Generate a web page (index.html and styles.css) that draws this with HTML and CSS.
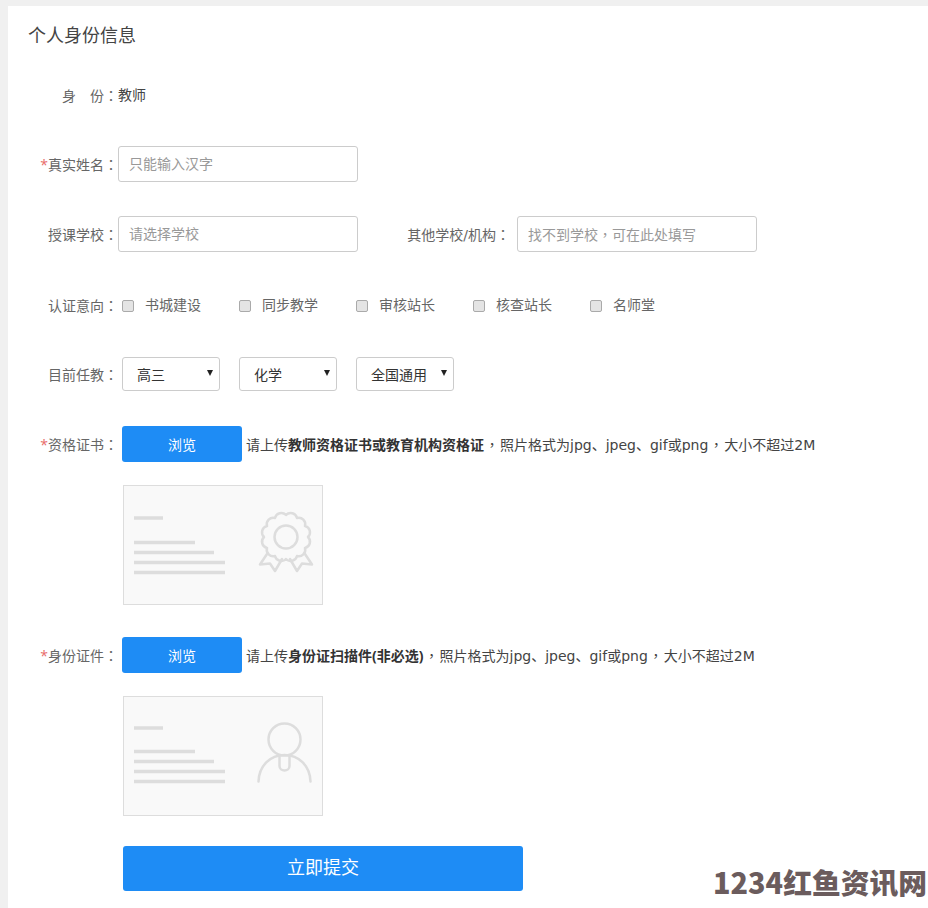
FILE: index.html
```html
<!DOCTYPE html>
<html lang="zh-CN">
<head>
<meta charset="utf-8">
<title>个人身份信息</title>
<link rel="stylesheet" href="styles.css">
</head>
<body>
<main class="card">
  <h1 class="title">个人身份信息</h1>
  <form class="form">
    <div class="row row-identity">
      <span class="label">身　份<span class="pn">：</span></span>
      <span class="value">教师</span>
    </div>
    <div class="row row-name">
      <label class="label"><em class="req">*</em>真实姓名<span class="pn">：</span></label>
      <input class="input" type="text" placeholder="只能输入汉字">
    </div>
    <div class="row row-school">
      <label class="label">授课学校<span class="pn">：</span></label>
      <input class="input" type="text" placeholder="请选择学校">
      <label class="label label-other">其他学校/机构<span class="pn">：</span></label>
      <input class="input input-comma" type="text" placeholder="找不到学校，可在此处填写">
    </div>
    <div class="row row-intent">
      <span class="label">认证意向<span class="pn">：</span></span>
      <div class="checks">
        <label class="check"><input class="box" type="checkbox">书城建设</label>
        <label class="check"><input class="box" type="checkbox">同步教学</label>
        <label class="check"><input class="box" type="checkbox">审核站长</label>
        <label class="check"><input class="box" type="checkbox">核查站长</label>
        <label class="check"><input class="box" type="checkbox">名师堂</label>
      </div>
    </div>
    <div class="row row-job">
      <span class="label">目前任教<span class="pn">：</span></span>
      <div class="selects">
        <span class="select-wrap"><select class="select"><option>高三</option></select></span>
        <span class="select-wrap"><select class="select"><option>化学</option></select></span>
        <span class="select-wrap"><select class="select"><option>全国通用</option></select></span>
      </div>
    </div>
    <div class="row row-upload">
      <span class="label"><em class="req">*</em>资格证书<span class="pn">：</span></span>
      <button class="browse" type="button">浏览</button>
      <span class="hint">请上传<b>教师资格证书或教育机构资格证</b><span class="pn">，</span>照片格式为jpg、jpeg、gif或png<span class="pn">，</span>大小不超过2M</span>
    </div>
    <div class="preview">
      <svg class="art" width="198" height="118" viewBox="1 1 198 118" aria-hidden="true">
        <g class="art-lines">
          <path d="M11 33h29M11 57.500h61M11 67.500h80M11 77.500h91M11 87.500h91"/>
        </g>
        <g class="art-icon">
          <path d="M185 52A6.500 6.500 0 0 1 182 63A6.500 6.500 0 0 1 174 71A6.500 6.500 0 0 1 163 74A6.500 6.500 0 0 1 152 71A6.500 6.500 0 0 1 144 63A6.500 6.500 0 0 1 141 52A6.500 6.500 0 0 1 144 41A6.500 6.500 0 0 1 152 33A6.500 6.500 0 0 1 163 30A6.500 6.500 0 0 1 174 33A6.500 6.500 0 0 1 182 41A6.500 6.500 0 0 1 185 52Z"/>
          <circle cx="163" cy="52" r="11.500"/>
          <path d="M144 69L137 79.500L147 78.500L152 86L159 74M182 69L189 79.500L179 78.500L174 86L167 74"/>
        </g>
      </svg>
    </div>
    <div class="row row-upload row-upload-id">
      <span class="label"><em class="req">*</em>身份证件<span class="pn">：</span></span>
      <button class="browse" type="button">浏览</button>
      <span class="hint">请上传<b>身份证扫描件(非必选)</b><span class="pn">，</span>照片格式为jpg、jpeg、gif或png<span class="pn">，</span>大小不超过2M</span>
    </div>
    <div class="preview">
      <svg class="art" width="198" height="118" viewBox="1 1 198 118" aria-hidden="true">
        <g class="art-lines">
          <path d="M11 32h29M11 55.500h61M11 65.500h80M11 75.500h91M11 85.500h91"/>
        </g>
        <g class="art-icon">
          <circle cx="161.500" cy="43.500" r="16"/>
          <path d="M135.500 85.500C136 70 147 59 161.500 59C176 59 187 70 187.500 85.500"/>
          <path d="M156.500 60V70C156.500 76 166.500 76 166.500 70V60"/>
        </g>
      </svg>
    </div>
    <button class="submit" type="button">立即提交</button>
  </form>
</main>
<div class="watermark">1234红鱼资讯网</div>
</body>
</html>
```

FILE: styles.css
```css
* { box-sizing: border-box; }
html, body { margin: 0; height: 908px; overflow: hidden; }
body {
  position: relative;
  background: #f0f0f0;
  padding: 6px 0 0 8px;
  font-family: "DejaVu Sans", "Noto Sans CJK SC", sans-serif;
  font-size: 14px;
  line-height: 20px;
  color: #666;
}
.card {
  background: #fff;
  height: 902px;
  padding: 18px 0 0 20px;
}
.title {
  margin: 0;
  font-size: 18px;
  font-weight: 400;
  line-height: 24px;
  color: #444;
}
.form { display: flex; flex-direction: column; align-items: flex-start; margin-top: 29px; }
.row { display: flex; align-items: center; height: 36px; }
.label { width: 90px; text-align: right; flex: none; white-space: nowrap; }
.pn { font-family: "Noto Sans CJK TC", sans-serif; font-feature-settings: "locl" 0; }
.req { color: #e86a6a; font-style: normal; font-family: "Open Sans", sans-serif; }
.value { color: #444; }
.row-name { margin-top: 33px; }
.row-school { margin-top: 34px; }
.row-intent { margin-top: 35px; }
.row-job { margin-top: 34px; height: 34px; }
.row-upload { margin-top: 35px; }
.row-upload-id { margin-top: 32px; }
.input {
  width: 240px;
  height: 36px;
  flex: none;
  border: 1px solid #ccc;
  border-radius: 3px;
  padding: 0 10px;
  font: inherit;
  color: #333;
  background: #fff;
  outline: none;
}
.input-comma { font-family: "Noto Sans CJK TC", sans-serif; font-feature-settings: "locl" 0; }
.input::placeholder { color: #999; opacity: 1; }
.label-other { width: 152px; margin-right: 7px; }
.checks { display: flex; margin-left: 4px; }
.check { display: flex; align-items: center; width: 117px; }
.box {
  appearance: none;
  width: 12px;
  height: 12px;
  margin: 1px 11px 0 0;
  border: 1px solid #aaa;
  border-radius: 2px;
  background: #e4e4e4;
}
.selects { display: flex; gap: 19px; margin-left: 4px; }
.select-wrap { position: relative; display: block; width: 98px; height: 34px; }
.select-wrap::after {
  content: "";
  position: absolute;
  right: 7px;
  top: 13px;
  border-left: 3px solid transparent;
  border-right: 3px solid transparent;
  border-top: 6px solid #222;
  pointer-events: none;
}
.select {
  appearance: none;
  display: block;
  width: 100%;
  height: 100%;
  padding: 1px 0 0 14px;
  border: 1px solid #ccc;
  border-radius: 3px;
  background: #fff;
  font: inherit;
  color: #333;
  outline: none;
}
.browse {
  width: 120px;
  height: 36px;
  flex: none;
  margin-left: 4px;
  padding: 1px 0 0;
  border: 0;
  border-radius: 3px;
  background: #1e8cf5;
  color: #fff;
  font: inherit;
}
.hint { margin-left: 4px; color: #444; white-space: nowrap; }
.hint b { color: #333; font-weight: 700; font-family: "Open Sans", "Noto Sans CJK SC", sans-serif; }
.hint .pn { margin: 0 1px; }
.preview {
  width: 200px;
  height: 120px;
  margin: 23px 0 0 95px;
  border: 1px solid #ddd;
  background: #f9f9f9;
}
.art { display: block; }
.art-lines path { fill: none; stroke: #ddd; stroke-width: 3.500; }
.art-icon * { fill: none; stroke: #ddd; stroke-width: 2.500; stroke-linejoin: round; stroke-linecap: round; }
.submit {
  width: 400px;
  height: 45px;
  margin: 30px 0 0 95px;
  padding: 0 0 1px;
  border: 0;
  border-radius: 3px;
  background: #1e8cf5;
  color: #fff;
  font: inherit;
  font-size: 18px;
}
.watermark {
  position: absolute;
  left: 713px;
  top: 864px;
  font-family: "Noto Sans CJK SC", sans-serif;
  font-size: 28.800px;
  font-weight: 900;
  line-height: 36px;
  color: #6b5c5d;
  text-shadow: 0 0 3px #fff;
  white-space: nowrap;
}
```
